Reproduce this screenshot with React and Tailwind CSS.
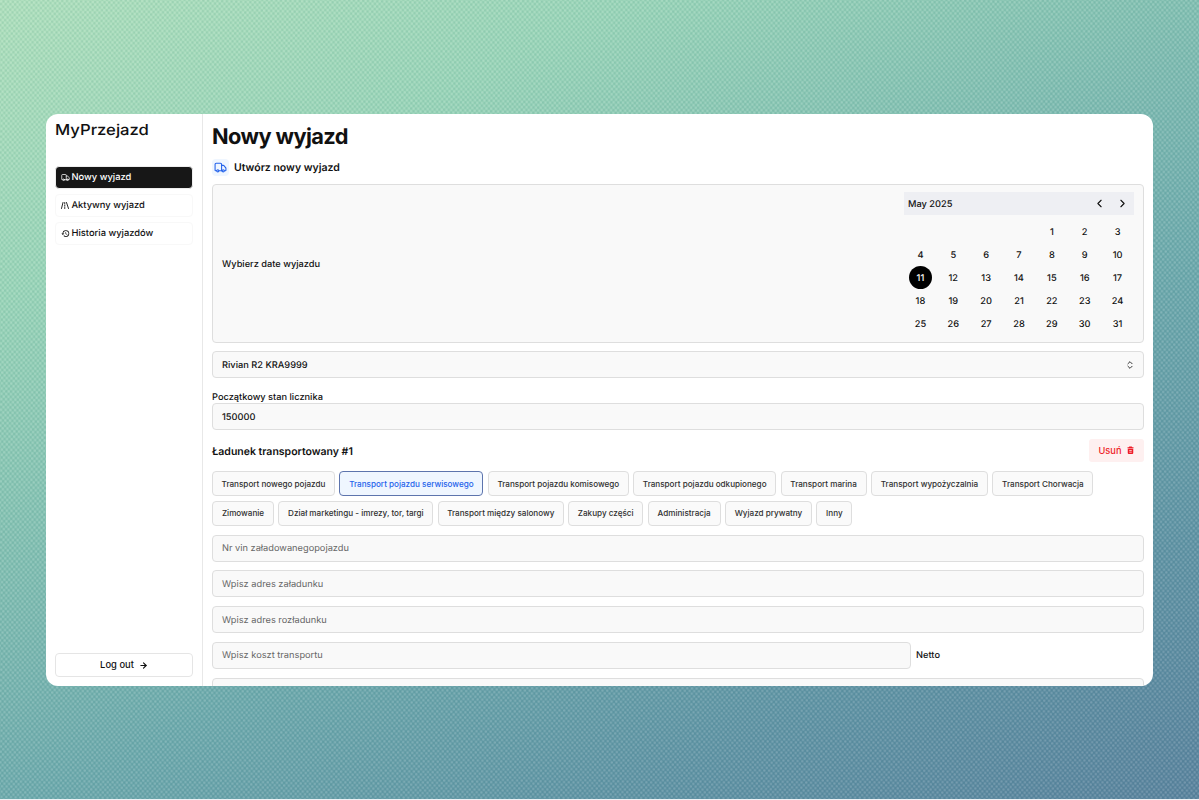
import React from 'react';
import { Truck, ArrowRight, ChevronLeft, ChevronRight, ChevronsUpDown } from 'lucide-react';
import { MdHistory } from 'react-icons/md';

const days = [null, null, null, null, ...Array.from({ length: 31 }, (_, i) => i + 1)];

const rowOne = [
  ['Transport nowego pojazdu', 'w-[123px]'],
  ['Transport pojazdu serwisowego', 'w-[144px]'],
  ['Transport pojazdu komisowego', 'w-[141px]'],
  ['Transport pojazdu odkupionego', 'w-[143px]'],
  ['Transport marina', 'w-[86px]'],
  ['Transport wypożyczalnia', 'w-[117px]'],
  ['Transport Chorwacja', 'w-[101px]'],
];
const rowTwo = [
  ['Zimowanie', 'w-[62px]'],
  ['Dział marketingu - imrezy, tor, targi', 'w-[155px]'],
  ['Transport między salonowy', 'w-[126px]'],
  ['Zakupy części', 'w-[75px]'],
  ['Administracja', 'w-[73px]'],
  ['Wyjazd prywatny', 'w-[87px]'],
  ['Inny', 'w-[36px]'],
];

function RoadIcon() {
  return (
    <svg className="h-[7px] w-2" viewBox="0 0 16 14" fill="none" stroke="currentColor" strokeWidth="1.8" strokeLinecap="round">
      <path d="M4 1 1 13M11 1l4 12M7.5 1v2.500M7.500 6v2.500M7.500 11v2" />
    </svg>
  );
}

function TrashIcon() {
  return (
    <svg className="h-2 w-[7px]" viewBox="0 0 14 16" fill="currentColor">
      <path fillRule="evenodd" d="M4.5 1h5l1 1.5H13v2H1v-2h2.5zM1.5 5.500h11V14a2 2 0 0 1-2 2h-7a2 2 0 0 1-2-2zM4.500 8.500v1.300h5V8.500zm0 3.200V13h5v-1.300z" />
    </svg>
  );
}

function Chip({ label, width }) {
  const active = label === 'Transport pojazdu serwisowego';
  const tone = active ? 'border-[#5d74ad] bg-[#eff6ff] text-[#2563eb]' : 'border-[#dedede] bg-[#fafafa] text-[#303030]';
  return (
    <button className={`flex h-[25px] shrink-0 items-center justify-center whitespace-nowrap rounded-[4px] border pt-px text-[8.12px] font-medium ${width} ${tone}`}>
      {label}
    </button>
  );
}

function Field({ children, className = '' }) {
  return (
    <div className={`flex h-[27px] shrink-0 items-center rounded-[4px] border border-[#dedede] bg-[#f9f9f9] px-[9px] text-[9.25px] ${className}`}>
      <span className="pt-0.5">{children}</span>
    </div>
  );
}

function Backdrop() {
  return (
    <svg className="absolute inset-0 size-full" aria-hidden="true">
      <defs>
        <pattern id="weave" width="4.7" height="5.3" patternUnits="userSpaceOnUse" patternTransform="rotate(2)">
          <circle cx="1.2" cy="1.3" r="1.15" fill="#fff" opacity=".17" />
          <circle cx="3.55" cy="3.95" r="1.15" fill="#fff" opacity=".17" />
          <circle cx="3.55" cy="1.3" r="1.1" fill="#175d60" opacity=".09" />
          <circle cx="1.2" cy="3.95" r="1.1" fill="#175d60" opacity=".09" />
        </pattern>
      </defs>
      <rect width="100%" height="100%" fill="url(#weave)" />
    </svg>
  );
}

export default function App() {
  return (
    <div className="h-[800px] w-[1199px] overflow-hidden bg-[#edf2f5] pb-px font-['Inter',sans-serif] text-[#111] antialiased [text-rendering:geometricPrecision]">
      <div className="relative flex h-[799px] bg-[linear-gradient(155deg,#addfbb_0%,#98d4b7_22%,#82c0b1_40%,#6ba8ab_60%,#5e92a3_80%,#58819c_100%)] pl-[46px] pt-[114px]">
        <Backdrop />
        <div className="relative flex h-[572px] w-[1107px] overflow-hidden rounded-[12px] bg-white">
          <aside className="flex w-[157px] shrink-0 flex-col border-r border-[#e8e8e8] pb-[9px] pl-[9px] pr-[9px] pt-[7px]">
            <div className="h-[18px] w-[76px] origin-left scale-x-[1.11] whitespace-nowrap text-[15px] font-medium leading-[18px]">MyPrzejazd</div>
            <nav className="mt-[27px] flex flex-col gap-[5px] text-[9.35px] font-medium">
              <div className="flex h-[23px] items-center gap-[2px] rounded-[4px] border border-[#eee] bg-[#171717] px-[4.5px] text-white"><Truck className="size-[9px]" /><span className="pt-0.5">Nowy wyjazd</span></div>
              <div className="flex h-[23px] items-center gap-[3px] rounded-[4px] border border-[#f8f8f8] px-[4.5px]"><RoadIcon /><span className="pt-0.5">Aktywny wyjazd</span></div>
              <div className="flex h-[23px] items-center gap-[2px] rounded-[4px] border border-[#f8f8f8] px-[4.5px]"><MdHistory className="size-[9px]" /><span className="pt-0.5">Historia wyjazdów</span></div>
            </nav>
            <button className="mt-auto flex h-6 items-center justify-center gap-[5px] rounded-[4px] border border-[#e5e5e5] text-[9.4px] font-medium">Log out<ArrowRight className="size-[9px]" strokeWidth={3} /></button>
          </aside>

          <main className="flex min-w-0 flex-1 flex-col overflow-hidden pl-[9px] pr-[9px]">
            <h1 className="mt-[9px] h-[28px] text-[21.8px] font-bold leading-[28px] tracking-[-0.6px]">Nowy wyjazd</h1>
            <div className="mt-[8px] flex h-4 shrink-0 items-center gap-[5px] text-[10.5px] font-semibold">
              <span className="flex size-[17px] items-center justify-center rounded-[4px] bg-[#eff6ff] text-[#2563eb]"><Truck className="size-[13px]" /></span>
              <span className="pt-px">Utwórz nowy wyjazd</span>
            </div>
            <section className="mt-[9px] flex h-[159px] shrink-0 items-center justify-between rounded-[4px] border border-[#dedede] bg-[#f9f9f9] pl-[9px] pr-[9px] text-[9.25px] font-medium">
              <span className="pt-0.5">Wybierz date wyjazdu</span>
              <div className="flex h-[143px] w-[230px] flex-col">
                <div className="flex h-[23px] items-center bg-[#eeeff3] pl-[4px]">
                  <span className="flex-1 pt-0.5">May 2025</span>
                  <span className="flex w-[23px] justify-center"><ChevronLeft className="size-[13px]" /></span>
                  <span className="flex w-[23px] justify-center"><ChevronRight className="size-[13px]" /></span>
                </div>
                <div className="mt-[5px] grid grid-cols-7 grid-rows-[repeat(5,23px)]">
                  {days.map((d, i) => (
                    <div key={i} className="flex items-center justify-center">
                      <span className={d === 11 ? 'flex size-[23px] items-center justify-center rounded-full bg-black pt-0.5 text-white' : 'pt-0.5'}>{d}</span>
                    </div>
                  ))}
                </div>
              </div>
            </section>
            <div className="mt-[8px] flex h-[27px] shrink-0 items-center justify-between rounded-[4px] border border-[#dedede] bg-[#f9f9f9] pl-[9px] pr-[8px] text-[9.25px] font-medium"><span className="pt-0.5">Rivian R2 KRA9999</span><ChevronsUpDown className="size-[10px]" /></div>
            <div className="mt-[14px] h-[11px] shrink-0 text-[9.25px] font-medium leading-[12px]">Początkowy stan licznika</div>
            <Field className="font-medium">150000</Field>
            <div className="mt-[8px] flex h-[24px] shrink-0 items-center justify-between">
              <h2 className="pt-[3px] text-[10.5px] font-semibold">Ładunek transportowany #1</h2>
              <button className="flex h-[23px] w-[55px] items-center justify-center gap-[6px] rounded-[3px] bg-[#fef0f0] text-[9.25px] font-medium text-[#ee1c28]"><span className="pt-0.5">Usuń</span><TrashIcon /></button>
            </div>
            <div className="mt-[9px] flex shrink-0 flex-col gap-[4.5px]">
              <div className="flex gap-[4.4px]">{rowOne.map(([label, width]) => <Chip key={label} label={label} width={width} />)}</div>
              <div className="flex gap-[4.4px]">{rowTwo.map(([label, width]) => <Chip key={label} label={label} width={width} />)}</div>
            </div>
            <div className="mt-[9px] flex flex-col gap-[8.8px] text-[#666]">
              <Field>Nr vin załadowanegopojazdu</Field>
              <Field>Wpisz adres załadunku</Field>
              <Field>Wpisz adres rozładunku</Field>
              <div className="flex items-center gap-[5px]">
                <Field className="w-[699px]">Wpisz koszt transportu</Field>
                <span className="pt-0.5 text-[9.25px] font-medium text-[#111]">Netto</span>
              </div>
              <Field />
            </div>
          </main>
        </div>
      </div>
    </div>
  );
}
